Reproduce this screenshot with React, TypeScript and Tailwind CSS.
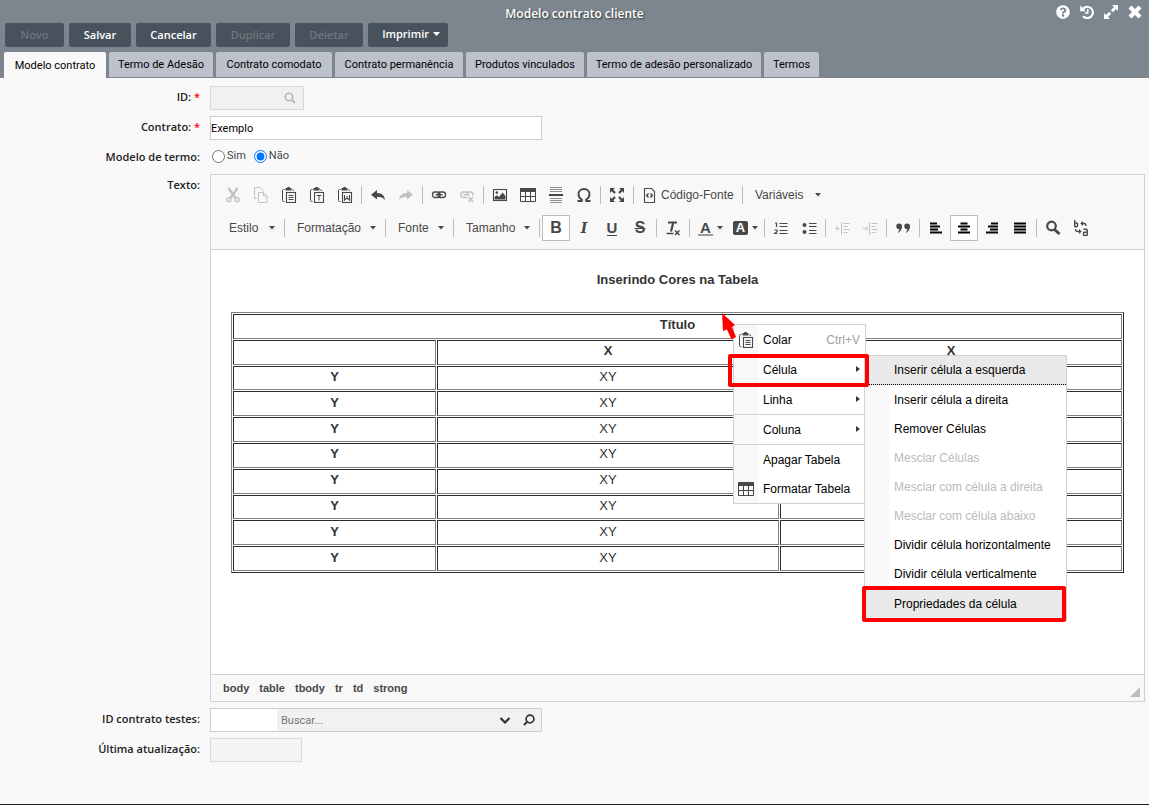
import { useState } from "react";
import type { ReactNode } from "react";
import { FaQuestionCircle } from "react-icons/fa";

const actions = [
  { label: "Novo", width: "w-[59px]", disabled: true },
  { label: "Salvar", width: "w-[62px]", disabled: false },
  { label: "Cancelar", width: "w-[75px]", disabled: false },
  { label: "Duplicar", width: "w-[74px]", disabled: true },
  { label: "Deletar", width: "w-[68px]", disabled: true },
];

const tabs = [
  { label: "Modelo contrato", width: "w-[102px]" },
  { label: "Termo de Adesão", width: "w-[104px]" },
  { label: "Contrato comodato", width: "w-[116px]" },
  { label: "Contrato permanência", width: "w-[128px]" },
  { label: "Produtos vinculados", width: "w-[118px]" },
  { label: "Termo de adesão personalizado", width: "w-[174px]" },
  { label: "Termos", width: "w-[55px]" },
];

const cellMenu = [
  { label: "Inserir célula a esquerda" },
  { label: "Inserir célula a direita" },
  { label: "Remover Células" },
  { label: "Mesclar Células", disabled: true },
  { label: "Mesclar com célula a direita", disabled: true },
  { label: "Mesclar com célula abaixo", disabled: true },
  { label: "Dividir célula horizontalmente" },
  { label: "Dividir célula verticalmente" },
];

const path = ["body", "table", "tbody", "tr", "td", "strong"];

/* ---------- icons ---------- */

function Icon({ children }: { children: ReactNode }) {
  return (
    <svg
      viewBox="0 0 16 16"
      className="h-4 w-4 shrink-0"
      fill="none"
      stroke="currentColor"
      aria-hidden="true"
    >
      {children}
    </svg>
  );
}

function Caret() {
  return (
    <svg
      viewBox="0 0 6 4"
      className="h-1 w-1.5 shrink-0"
      fill="currentColor"
      aria-hidden="true"
    >
      <path d="M0 0h6L3 3.5z" />
    </svg>
  );
}

const Clipboard = (
  <>
    <path d="M3.5 2.500H2.500Q1.500 2.500 1.500 3.500V13.500Q1.500 14.500 2.500 14.500H3.500M11.500 2.500Q12.500 2.500 12.500 4" />
    <path
      d="M4.500 1h1.700V0h2.600v1h1.700v2.500h-6z"
      fill="currentColor"
      stroke="none"
    />
    <rect x="5.500" y="5.500" width="9" height="10" strokeWidth="1.100" />
  </>
);

const icons = {
  cut: (
    <Icon>
      <path d="M3.5 1L10.500 11M12.500 1L5.500 11" strokeWidth="2.400" />
      <circle cx="3.800" cy="12.800" r="2" strokeWidth="1.400" />
      <circle cx="12.200" cy="12.800" r="2" strokeWidth="1.400" />
    </Icon>
  ),
  copy: (
    <Icon>
      <path d="M4 11.500H1.500v-11h5.500l3 3v1" />
      <path d="M5.500 5.500h5l3.500 3.500v6.500H5.500zM10.500 5.500V9H14" />
    </Icon>
  ),
  paste: (
    <Icon>
      {Clipboard}
      <path d="M7.500 8.500h5M7.500 10.500h5M7.500 12.500h5" />
    </Icon>
  ),
  pasteText: (
    <Icon>
      {Clipboard}
      <path d="M7.500 8.500h5M10 8.500V13.500" />
    </Icon>
  ),
  pasteWord: (
    <Icon>
      {Clipboard}
      <path d="M7.500 8v5L10 11l2.500 2V8M10 9v3" strokeWidth="1.100" />
    </Icon>
  ),
  undo: (
    <Icon>
      <path
        d="M7 3v3c5 .2 7.500 2.500 8 7-2-2.500-4-3.300-8-3.300v2.800L1 7.800z"
        fill="currentColor"
        stroke="none"
      />
    </Icon>
  ),
  redo: (
    <Icon>
      <path
        d="M9 3v3c-5 .2-7.500 2.500-8 7 2-2.500 4-3.300 8-3.300v2.800l6-4.700z"
        fill="currentColor"
        stroke="none"
      />
    </Icon>
  ),
  link: (
    <Icon>
      <rect x="1.500" y="5" width="7.500" height="5.500" rx="2.500" strokeWidth="1.300" />
      <rect x="7" y="5" width="7.500" height="5.500" rx="2.500" strokeWidth="1.300" />
      <path d="M4.500 7.700h7" strokeWidth="1.300" />
    </Icon>
  ),
  unlink: (
    <Icon>
      <path
        d="M9 8V7.500A2.500 2.500 0 0 0 6.500 5h-2a2.600 2.600 0 0 0 0 5.500H8M8 5h3.700A2.600 2.600 0 0 1 14 8.500M4.500 7.700h6"
        strokeWidth="1.400"
      />
      <path d="M9.500 10l4.500 5M14 10l-4.500 5" strokeWidth="1.500" />
    </Icon>
  ),
  image: (
    <Icon>
      <rect x="1.500" y="2.500" width="13" height="11" strokeWidth="1.100" />
      <circle cx="4.800" cy="5.600" r="1.300" fill="currentColor" stroke="none" />
      <path
        d="M2.500 12.500V10L5 8.300l2 1.700 3.500-4.500L13.500 9v3.500z"
        fill="currentColor"
        stroke="none"
      />
    </Icon>
  ),
  table: (
    <Icon>
      <path d="M0 1h16v4H0z" fill="currentColor" stroke="none" />
      <path d="M.5 4v10.500h15V4M.5 9.500h15M5.500 5v9.500M10.500 5v9.500" />
    </Icon>
  ),
  rule: (
    <Icon>
      <path d="M2 .5h12M2 2.500h12M2 4.500h12M2 11.500h12M2 13.500h12M2 15.500h12" opacity=".6" />
      <path d="M1 8h14" strokeWidth="2" />
    </Icon>
  ),
  omega: (
    <Icon>
      <path
        d="M1.500 14h4.300v-1.500C3.600 11.400 2.500 9.500 2.500 7.300 2.500 4.200 4.800 2 8 2s5.500 2.200 5.500 5.300c0 2.200-1.100 4.100-3.300 5.200V14h4.300"
        strokeWidth="1.900"
      />
    </Icon>
  ),
  maximize: (
    <Icon>
      <path
        d="M1 1h5L4.300 2.700l2.500 2.500-1.600 1.600-2.500-2.500L1 6zM15 1v5l-1.700-1.700-2.500 2.500-1.600-1.600 2.500-2.500L10 1zM1 15v-5l1.700 1.700 2.500-2.500 1.600 1.600-2.500 2.500L6 15zM15 15h-5l1.700-1.700-2.500-2.500 1.600-1.600 2.500 2.500L15 10z"
        fill="currentColor"
        stroke="none"
      />
    </Icon>
  ),
  source: (
    <Icon>
      <path d="M3.500 1.500h7l3 3v11h-10z" strokeWidth="1.100" />
      <path d="M7.500 6.500L5.700 8.500l1.800 2M9.500 6.500l1.800 2-1.800 2" strokeWidth="1.500" />
    </Icon>
  ),
  removeFormat: (
    <Icon>
      <path d="M3 2.500h9M8.300 2.500L6 11.500" strokeWidth="2.200" />
      <path d="M1.500 13.500h7M10 10.500l4.500 4.500M14.500 10.500L10 15" strokeWidth="1.500" />
    </Icon>
  ),
  numbered: (
    <Icon>
      <path d="M2 3h1.500v4M1.500 10h2.500v1.800l-2.300 1.700h2.500" strokeWidth="1.200" />
      <path d="M6.500 3.500h8M6.500 6.500h8M6.500 10.500h8M6.500 13.500h8" />
    </Icon>
  ),
  bulleted: (
    <Icon>
      <circle cx="3.500" cy="5" r="2" fill="currentColor" stroke="none" />
      <circle cx="3.500" cy="12" r="2" fill="currentColor" stroke="none" />
      <path d="M8 3.500h7.500M8 6.500h7.500M8 10.500h7.500M8 13.500h7.500" />
    </Icon>
  ),
  outdent: (
    <Icon>
      <path d="M7.500 2v13M9.500 3.500h6M9.500 6.500h4M9.500 9.500h6M9.500 12.500h4M2 8.500h4M4 6L1.500 8.500 4 11" />
    </Icon>
  ),
  indent: (
    <Icon>
      <path d="M7.500 2v13M9.500 3.500h6M9.500 6.500h4M9.500 9.500h6M9.500 12.500h4M1 8.500h4M3.500 6L6 8.500 3.500 11" />
    </Icon>
  ),
  quote: (
    <Icon>
      <path
        d="M4 3.500a3 3 0 0 1 3 3.200c0 3-2 5.300-4.800 6.300C3.700 11.500 4.300 10.500 4.400 9.300A2.900 2.900 0 1 1 4 3.500zM12 3.500a3 3 0 0 1 3 3.200c0 3-2 5.300-4.800 6.300 1.500-1.500 2.100-2.500 2.200-3.700A2.900 2.900 0 1 1 12 3.500z"
        fill="currentColor"
        stroke="none"
      />
    </Icon>
  ),
  left: (
    <Icon>
      <path d="M2 3.500h7M2 6.500h10M2 9.500h8M2 12.500h12" stroke="#000" strokeWidth="1.800" />
    </Icon>
  ),
  center: (
    <Icon>
      <path d="M4.500 3.500h7M2 6.500h12M4.500 9.500h7M2 12.500h12" stroke="#000" strokeWidth="1.800" />
    </Icon>
  ),
  right: (
    <Icon>
      <path d="M7 3.500h7M4 6.500h10M6 9.500h8M2 12.500h12" stroke="#000" strokeWidth="1.800" />
    </Icon>
  ),
  justify: (
    <Icon>
      <path d="M2 3.500h12M2 6.500h12M2 9.500h12M2 12.500h12" stroke="#000" strokeWidth="1.800" />
    </Icon>
  ),
  find: (
    <Icon>
      <circle cx="6.500" cy="6" r="4.300" strokeWidth="2.200" />
      <path d="M9.500 9.500l5 4.500" strokeWidth="3" />
    </Icon>
  ),
  replace: (
    <Icon>
      <path d="M1.700 0v6.700M1.700 3h1.800q1 0 1 1v1.700q0 1-1 1H1.700" strokeWidth="1.400" />
      <path d="M10.500 9.300h2.700q1 0 1 1v5.400M14.200 12.300h-2.700q-1 0-1 1v1.200q0 1 1 1h2.700" strokeWidth="1.400" />
      <path d="M8.500 3.500h2.500q2 0 2 2.500" strokeWidth="1.300" />
      <path d="M2.500 9q0 2.500 2 2.500H7" strokeWidth="1.300" />
      <path d="M10 1v5L7.300 3.500zM6 9v5l2.700-2.500z" fill="currentColor" stroke="none" />
    </Icon>
  ),
};

/* ---------- toolbar pieces ---------- */

function Tool({
  label,
  active,
  disabled,
  children,
}: {
  label: string;
  active?: boolean;
  disabled?: boolean;
  children: ReactNode;
}) {
  return (
    <button
      type="button"
      aria-label={label}
      title={label}
      disabled={disabled}
      className={`flex h-[26px] w-7 shrink-0 items-center justify-center ${
        active ? "border border-[#bcbcbc] bg-white" : ""
      } ${disabled ? "opacity-30" : ""}`}
    >
      {children}
    </button>
  );
}

function Separator() {
  return <span className="mx-0.5 h-[18px] w-px shrink-0 bg-[#bcbcbc]" />;
}

function Combo({ label, width }: { label: string; width: string }) {
  return (
    <span className={`relative flex h-[26px] items-center ${width}`}>
      <select
        aria-label={label}
        className="h-full w-full appearance-none bg-transparent pl-2.5 text-xs outline-none"
      >
        <option>{label}</option>
      </select>
      <span className="pointer-events-none absolute right-[7px]">
        <Caret />
      </span>
    </span>
  );
}

function Toolbar() {
  return (
    <div className="flex flex-col gap-[7px] border-b border-[#d1d1d1] bg-[#f8f8f8] pt-[7px] pb-2 pl-2 text-[#484848]">
      <div className="flex items-center">
        <Tool label="Recortar" disabled>{icons.cut}</Tool>
        <Tool label="Copiar" disabled>{icons.copy}</Tool>
        <Tool label="Colar">{icons.paste}</Tool>
        <Tool label="Colar como texto">{icons.pasteText}</Tool>
        <Tool label="Colar do Word">{icons.pasteWord}</Tool>
        <Separator />
        <Tool label="Desfazer">{icons.undo}</Tool>
        <Tool label="Refazer" disabled>{icons.redo}</Tool>
        <Separator />
        <Tool label="Link">{icons.link}</Tool>
        <Tool label="Remover link" disabled>{icons.unlink}</Tool>
        <Separator />
        <Tool label="Imagem">{icons.image}</Tool>
        <Tool label="Tabela">{icons.table}</Tool>
        <Tool label="Linha horizontal">{icons.rule}</Tool>
        <Tool label="Caractere especial">{icons.omega}</Tool>
        <Separator />
        <Tool label="Maximizar">{icons.maximize}</Tool>
        <Separator />
        <button
          type="button"
          className="flex h-[26px] w-[104px] items-center gap-1 pl-[5px] text-xs whitespace-nowrap"
        >
          {icons.source}
          Código-Fonte
        </button>
        <Separator />
        <Combo label="Variáveis" width="w-[83px]" />
      </div>

      <div className="flex items-center">
        <Combo label="Estilo" width="w-[63px]" />
        <Separator />
        <Combo label="Formatação" width="w-[96px]" />
        <Separator />
        <Combo label="Fonte" width="w-[63px]" />
        <Separator />
        <Combo label="Tamanho" width="w-[81px]" />
        <Separator />
        <Tool label="Negrito" active>
          <span className="text-base font-bold">B</span>
        </Tool>
        <Tool label="Itálico">
          <span className="font-['DejaVu_Serif',serif] text-sm font-bold italic">I</span>
        </Tool>
        <Tool label="Sublinhado">
          <span className="border-b border-current text-[15px] leading-[14px] font-bold">U</span>
        </Tool>
        <Tool label="Tachado">
          <span className="text-base font-bold line-through">S</span>
        </Tool>
        <Separator />
        <Tool label="Remover formatação">{icons.removeFormat}</Tool>
        <Separator />
        <button
          type="button"
          aria-label="Cor do texto"
          className="flex h-[26px] w-[35px] items-center gap-1 pl-1.5"
        >
          <span className="w-[15px] border-b-2 border-[#9a9a9a] text-center text-[15px] leading-[13px] font-bold">
            A
          </span>
          <Caret />
        </button>
        <button
          type="button"
          aria-label="Cor do plano de fundo"
          className="flex h-[26px] w-[35px] items-center gap-1 pl-1.5"
        >
          <span className="h-3.5 w-[15px] rounded-xs bg-[#484848] text-center text-[13px] leading-[14px] font-bold text-white">
            A
          </span>
          <Caret />
        </button>
        <Separator />
        <Tool label="Lista numerada">{icons.numbered}</Tool>
        <Tool label="Lista sem números">{icons.bulleted}</Tool>
        <Separator />
        <Tool label="Diminuir recuo" disabled>{icons.outdent}</Tool>
        <Tool label="Aumentar recuo" disabled>{icons.indent}</Tool>
        <Separator />
        <Tool label="Citação">{icons.quote}</Tool>
        <Separator />
        <Tool label="Alinhar à esquerda">{icons.left}</Tool>
        <Tool label="Centralizar" active>{icons.center}</Tool>
        <Tool label="Alinhar à direita">{icons.right}</Tool>
        <Tool label="Justificado">{icons.justify}</Tool>
        <Separator />
        <Tool label="Localizar">{icons.find}</Tool>
        <Tool label="Substituir">{icons.replace}</Tool>
      </div>
    </div>
  );
}

/* ---------- editor content ---------- */

const cell =
  "border border-t-[#2c2c2c] border-l-[#2c2c2c] border-r-[#808080] border-b-[#808080] px-px pb-0.5";

function ContentTable() {
  return (
    <table className="h-[261px] w-full table-fixed border-separate border-spacing-px border border-t-[#808080] border-l-[#808080] border-r-[#2c2c2c] border-b-[#2c2c2c] text-center text-[13px] leading-5">
      <colgroup>
        <col className="w-[203px]" />
        <col />
        <col />
      </colgroup>
      <tbody>
        <tr>
          <th colSpan={3} className={cell}>Título</th>
        </tr>
        <tr>
          <td className={cell}></td>
          <th className={cell}>X</th>
          <th className={cell}>X</th>
        </tr>
        {[...Array(8)].map((_, index) => (
          <tr key={index}>
            <th className={cell}>Y</th>
            <td className={cell}>XY</td>
            <td className={cell}></td>
          </tr>
        ))}
      </tbody>
    </table>
  );
}

function MenuItem({
  label,
  icon,
  shortcut,
  submenu,
  separator,
}: {
  label: string;
  icon?: ReactNode;
  shortcut?: string;
  submenu?: boolean;
  separator?: boolean;
}) {
  return (
    <button
      type="button"
      role="menuitem"
      className={`flex w-full items-stretch text-left ${
        separator ? "h-[30px] border-b border-[#d1d1d1]" : "h-[29px]"
      }`}
    >
      <span className="flex w-6 items-center justify-center bg-[#f8f8f8] text-[#484848]">
        {icon}
      </span>
      <span className="flex flex-1 items-center justify-between px-[5px]">
        {label}
        {shortcut && <span className="text-[#a0a0a0]">{shortcut}</span>}
        {submenu && (
          <svg viewBox="0 0 4 6" className="mb-0.5 h-1.5 w-1" fill="#383838" aria-hidden="true">
            <path d="M0 0l4 3-4 3z" />
          </svg>
        )}
      </span>
    </button>
  );
}

function ContextMenus() {
  return (
    <>
      <div
        role="menu"
        className="absolute top-[74px] left-[522px] w-[133px] border border-[#d1d1d1] bg-white text-xs text-black"
      >
        <MenuItem label="Colar" icon={icons.paste} shortcut="Ctrl+V" separator />
        <MenuItem label="Célula" submenu separator />
        <MenuItem label="Linha" submenu separator />
        <MenuItem label="Coluna" submenu separator />
        <MenuItem label="Apagar Tabela" />
        <MenuItem label="Formatar Tabela" icon={icons.table} />
      </div>

      <div
        role="menu"
        className="absolute top-[105px] left-[653px] w-[203px] border border-[#d1d1d1] bg-white text-xs text-black"
      >
        {cellMenu.map((item, index) => (
          <button
            key={item.label}
            type="button"
            role="menuitem"
            disabled={item.disabled}
            className={`flex h-[29px] w-full items-stretch text-left ${
              index === 0 ? "border-b border-dotted border-black bg-[#e9e9e9]" : ""
            } ${item.disabled ? "text-[#bababa]" : ""}`}
          >
            <span className={`w-6 ${index === 0 ? "" : "bg-[#f8f8f8]"}`} />
            <span className="flex items-center pl-[5px]">{item.label}</span>
          </button>
        ))}
        <button
          type="button"
          role="menuitem"
          className="flex h-8 w-full items-center bg-[#e9e9e9] pl-[29px] text-left"
        >
          Propriedades da célula
        </button>
      </div>

      {/* Highlights */}
      <span className="pointer-events-none absolute top-[104px] left-[517px] h-[33px] w-[141px] rounded-xs border-4 border-[#ff0000]" />
      <span className="pointer-events-none absolute top-[336px] left-[651px] h-9 w-[204px] rounded-xs border-4 border-[#ff0000]" />
      <svg
        viewBox="0 0 16 28"
        className="pointer-events-none absolute top-[63px] left-[510px] h-7 w-4"
        aria-hidden="true"
      >
        <path d="M1 0L14 12l-3 2 4 10-4.500 2.500L6 16.500 2 18z" fill="#ff0000" />
      </svg>
    </>
  );
}

function Editor() {
  return (
    <div className="border border-[#d1d1d1] bg-white font-['Liberation_Sans',Arial,sans-serif]">
      <Toolbar />
      <div className="relative min-h-[424px] px-5 pt-5 text-[#333]">
        <p className="mb-[22px] text-center text-[13px] leading-5 font-bold">
          Inserindo Cores na Tabela
        </p>
        <ContentTable />
        <ContextMenus />
      </div>
      <div className="flex h-[27px] items-center justify-between border-t border-[#d1d1d1] bg-[#f8f8f8] pr-1 pl-3">
        <div className="flex gap-2.5 text-[11px] font-bold text-[#484848]">
          {path.map((node) => (
            <a key={node} href="#">
              {node}
            </a>
          ))}
        </div>
        <svg viewBox="0 0 10 10" className="mt-2 h-2.5 w-2.5" fill="#bcbcbc" aria-hidden="true">
          <path d="M10 0v10H0z" />
        </svg>
      </div>
    </div>
  );
}

/* ---------- page ---------- */

function Label({
  htmlFor,
  required,
  children,
}: {
  htmlFor?: string;
  required?: boolean;
  children: ReactNode;
}) {
  return (
    <label
      htmlFor={htmlFor}
      className="text-right font-['Open_Sans',sans-serif] leading-[22px] font-semibold text-[#222]"
    >
      {children}
      {required && <span className="text-[#ff0000]"> *</span>}
    </label>
  );
}

export default function App() {
  const [activeTab, setActiveTab] = useState("Modelo contrato");
  const [contract, setContract] = useState("Exemplo");
  const [isTerm, setIsTerm] = useState("nao");

  return (
    <div className="flex min-h-screen flex-col border-b border-[#1d2024] bg-[#f9f9f9] font-[Roboto,'Noto_Sans',sans-serif] text-[11px] text-[#333]">
      <header className="bg-[#7d868f]">
        <div className="grid h-[23px] grid-cols-[1fr_auto_1fr] items-center">
          <span />
          <h1 className="pt-1 font-['Open_Sans',sans-serif] text-xs font-semibold text-white text-shadow-[1px_1px_2px_#333]">
            Modelo contrato cliente
          </h1>
          <div className="flex justify-end gap-2.5 pr-[7px] text-sm text-white">
            <button type="button" aria-label="Ajuda"><FaQuestionCircle /></button>
            <button type="button" aria-label="Histórico">
              <svg viewBox="0 0 14 14" className="h-3.5 w-3.5" fill="none" stroke="currentColor">
                <path d="M2.500 4.200A5.700 5.700 0 1 1 3 11.300" strokeWidth="2.200" />
                <path d="M.2.500v5.700h5.700z" fill="currentColor" stroke="none" />
                <path d="M7.800 4v4H5" strokeWidth="1.500" />
              </svg>
            </button>
            <button type="button" aria-label="Expandir">
              <svg viewBox="0 0 14 14" className="h-3.5 w-3.5" fill="currentColor">
                <path d="M8 0h6v6l-2-2-3.200 3.200-2-2L10 2zM0 14V8l2 2 3.200-3.200 2 2L4 12l2 2z" />
              </svg>
            </button>
            <button type="button" aria-label="Fechar">
              <svg viewBox="0 0 14 14" className="h-3.5 w-3.5" stroke="currentColor" strokeWidth="4.200">
                <path d="M2 2l10 10M12 2L2 12" />
              </svg>
            </button>
          </div>
        </div>

        <div className="flex gap-[5px] pl-[5px] font-['Open_Sans',sans-serif] font-semibold">
          {actions.map((action) => (
            <button
              key={action.label}
              type="button"
              disabled={action.disabled}
              className={`h-6 rounded-xs bg-[#48525c] ${action.width} ${
                action.disabled ? "text-[#6d767e]" : "text-white"
              }`}
            >
              {action.label}
            </button>
          ))}
          <button
            type="button"
            className="flex h-6 w-20 items-center justify-end gap-1 rounded-xs bg-[#48525c] pr-2 pb-0.5 text-white"
          >
            Imprimir
            <svg viewBox="0 0 7 4" className="h-1 w-[7px]" fill="currentColor" aria-hidden="true">
              <path d="M0 0h7L3.500 4z" />
            </svg>
          </button>
        </div>

        <div role="tablist" className="flex h-[31px] gap-[3px] pt-[5px] pl-1">
          {tabs.map((tab) => (
            <button
              key={tab.label}
              type="button"
              role="tab"
              aria-selected={activeTab === tab.label}
              onClick={() => setActiveTab(tab.label)}
              className={`rounded-t-xs pt-0.5 whitespace-nowrap text-black ${tab.width} ${
                activeTab === tab.label
                  ? "h-[26px] bg-[#f9f9f9]"
                  : "h-[25px] bg-[#bdc2ca]"
              }`}
            >
              {tab.label}
            </button>
          ))}
        </div>
      </header>

      <form className="grid grid-cols-[200px_minmax(0,1fr)] gap-x-2.5 gap-y-1.5 pt-2 pr-1">
        <Label htmlFor="id" required>ID:</Label>
        <div className="flex h-6 w-[94px] items-center border border-[#d9d9d9] bg-[#f1f1f1] pr-[7px]">
          <input id="id" disabled className="w-full min-w-0 flex-1" />
          <svg viewBox="0 0 12 12" className="h-3 w-3 text-[#b5b5b5]" fill="none" stroke="currentColor" aria-hidden="true">
            <circle cx="5" cy="5" r="3.700" strokeWidth="1.500" />
            <path d="M8 8l3 3" strokeWidth="1.800" />
          </svg>
        </div>

        <Label htmlFor="contrato" required>Contrato:</Label>
        <input
          id="contrato"
          value={contract}
          onChange={(e) => setContract(e.target.value)}
          className="h-6 w-[332px] border border-[#ccc] bg-white text-black"
        />

        <Label>Modelo de termo:</Label>
        <div className="flex h-[22px] items-center gap-2 pb-0.5 pl-0.5 text-[#444]">
          <label className="flex items-center gap-0.5">
            <input
              type="radio"
              name="termo"
              value="sim"
              checked={isTerm === "sim"}
              onChange={(e) => setIsTerm(e.target.value)}
              className="h-[13px] w-[13px]"
            />
            Sim
          </label>
          <label className="flex items-center gap-0.5">
            <input
              type="radio"
              name="termo"
              value="nao"
              checked={isTerm === "nao"}
              onChange={(e) => setIsTerm(e.target.value)}
              className="h-[13px] w-[13px]"
            />
            Não
          </label>
        </div>

        <Label>Texto:</Label>
        <Editor />

        <Label htmlFor="teste">ID contrato testes:</Label>
        <div className="flex h-6 w-[332px] items-center border border-[#ccc] bg-[#f1f1f1] pr-1.5 text-[#333]">
          <input id="teste" className="h-full w-[66px] bg-white" />
          <input
            aria-label="Buscar contrato"
            placeholder="Buscar..."
            className="h-full min-w-0 flex-1 pl-1 placeholder:text-[#777]"
          />
          <button type="button" aria-label="Abrir lista" className="mr-3">
            <svg viewBox="0 0 12 12" className="h-3 w-3" fill="none" stroke="currentColor" strokeWidth="2.200">
              <path d="M1.500 4L6 8.500 10.500 4" />
            </svg>
          </button>
          <button type="button" aria-label="Pesquisar">
            <svg viewBox="0 0 12 12" className="h-3 w-3" fill="none" stroke="currentColor">
              <circle cx="7" cy="5" r="3.900" strokeWidth="1.700" />
              <path d="M4.200 7.800L1 11" strokeWidth="2" />
            </svg>
          </button>
        </div>

        <Label htmlFor="atualizacao">Última atualização:</Label>
        <input
          id="atualizacao"
          disabled
          className="h-6 w-[92px] border border-[#d9d9d9] bg-[#f5f5f5]"
        />
      </form>
    </div>
  );
}
